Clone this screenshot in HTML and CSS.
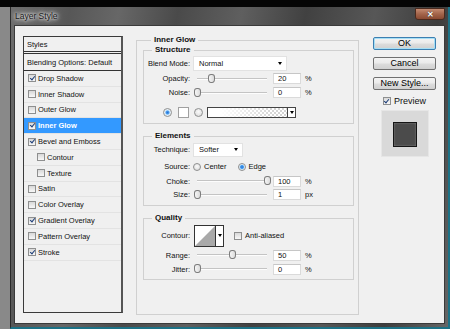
FILE: index.html
```html
<!DOCTYPE html>
<html lang="en">
<head>
    <meta charset="UTF-8">
    <title>Layer Style</title>
    <link rel="stylesheet" href="styles.css">
</head>
<body>
    <div class="topbar"></div>

    <div class="window">
        <div class="titlebar">
            <span class="title">Layer Style</span>
            <span class="close">&#x2715;</span>
        </div>

        <div class="client">
            <!-- Left: list of effects -->
            <ul class="styles-list">
                <li class="head">Styles</li>
                <li class="blend">Blending Options: Default</li>
                <li><span class="cb on"></span>Drop Shadow</li>
                <li><span class="cb"></span>Inner Shadow</li>
                <li><span class="cb"></span>Outer Glow</li>
                <li class="selected"><span class="cb on"></span>Inner Glow</li>
                <li><span class="cb on"></span>Bevel and Emboss</li>
                <li class="sub"><span class="cb"></span>Contour</li>
                <li class="sub"><span class="cb"></span>Texture</li>
                <li><span class="cb"></span>Satin</li>
                <li><span class="cb"></span>Color Overlay</li>
                <li><span class="cb on"></span>Gradient Overlay</li>
                <li><span class="cb"></span>Pattern Overlay</li>
                <li><span class="cb on"></span>Stroke</li>
            </ul>

            <!-- Middle: Inner Glow settings -->
            <fieldset class="group outer">
                <legend>Inner Glow</legend>

                <fieldset class="group structure">
                    <legend>Structure</legend>
                    <div class="row r-blend">
                        <label>Blend Mode:</label>
                        <div class="select w-blend">Normal<span class="arrow"></span></div>
                    </div>
                    <div class="row r-13">
                        <label>Opacity:</label>
                        <div class="track"><span class="thumb" style="left: 20%"></span></div>
                        <div class="field">20</div><span class="unit">%</span>
                    </div>
                    <div class="row r-15">
                        <label>Noise:</label>
                        <div class="track"><span class="thumb" style="left: 0%"></span></div>
                        <div class="field">0</div><span class="unit">%</span>
                    </div>
                    <div class="row r-color">
                        <span class="radio on"></span>
                        <span class="swatch"></span>
                        <span class="radio"></span>
                        <div class="gradient"><span class="fill"></span><span class="drop"><span class="arrow"></span></span></div>
                    </div>
                </fieldset>

                <fieldset class="group elements">
                    <legend>Elements</legend>
                    <div class="row r-blend">
                        <label>Technique:</label>
                        <div class="select w-tech">Softer<span class="arrow"></span></div>
                    </div>
                    <div class="row r-source">
                        <label>Source:</label>
                        <span class="radio"></span><span class="opt">Center</span>
                        <span class="radio on"></span><span class="opt">Edge</span>
                    </div>
                    <div class="row r-12">
                        <label>Choke:</label>
                        <div class="track"><span class="thumb" style="left: 100%"></span></div>
                        <div class="field">100</div><span class="unit">%</span>
                    </div>
                    <div class="row r-15">
                        <label>Size:</label>
                        <div class="track"><span class="thumb" style="left: 0%"></span></div>
                        <div class="field">1</div><span class="unit">px</span>
                    </div>
                </fieldset>

                <fieldset class="group quality">
                    <legend>Quality</legend>
                    <div class="row r-contour">
                        <label>Contour:</label>
                        <div class="contour">
                            <svg class="curve" width="22" height="22" viewBox="0 0 22 22">
                                <polygon points="0,22 22,0 22,22" fill="#a9a9a9"/>
                            </svg>
                            <span class="drop"><span class="arrow"></span></span>
                        </div>
                        <span class="cb"></span><span class="opt">Anti-aliased</span>
                    </div>
                    <div class="row r-14">
                        <label>Range:</label>
                        <div class="track"><span class="thumb" style="left: 50%"></span></div>
                        <div class="field">50</div><span class="unit">%</span>
                    </div>
                    <div class="row r-14">
                        <label>Jitter:</label>
                        <div class="track"><span class="thumb" style="left: 0%"></span></div>
                        <div class="field">0</div><span class="unit">%</span>
                    </div>
                </fieldset>
            </fieldset>

            <!-- Right: buttons and preview -->
            <div class="actions">
                <button class="btn default">OK</button>
                <button class="btn">Cancel</button>
                <button class="btn">New Style...</button>
                <div class="preview-toggle"><span class="cb on"></span>Preview</div>
                <div class="preview-box"><div class="preview-square"></div></div>
            </div>
        </div>
    </div>
</body>
</html>
```

FILE: styles.css
```css
/* Layer Style dialog */
body {
    margin: 0;
    width: 450px;
    height: 329px;
    overflow: hidden;
    background-color: #898989;
    font-family: "Liberation Sans", Arial, sans-serif;
    font-size: 7.5px;
    color: #111;
}

.topbar {
    height: 7px;
    background-color: #050505;
}

.window {
    box-sizing: border-box;
    width: 440px;
    height: 322px;
    margin-left: 10px;
    padding: 0 3px 3px 3px;
    display: flex;
    flex-direction: column;
    border-left: 1px solid #2a2a2a;
    border-right: 2px solid #1d7286;
    border-bottom: 2px solid #1d7286;
    background: linear-gradient(100deg, #6e6e6e 0%, #575757 12%, #676767 22%, #4a4a4a 34%, #5f5f5f 47%, #414141 60%, #575757 74%, #3d3d3d 87%, #666 100%);
}

.titlebar {
    height: 18px;
    display: flex;
    align-items: center;
}

.title {
    padding-left: 1px;
    font-size: 8.5px;
    color: #1a1a1a;
    text-shadow: 0 0 3px #fff, 0 0 5px #ddd, 0 0 6px #ccc;
}

.close {
    margin-left: auto;
    align-self: flex-start;
    margin-top: 1px;
    width: 30px;
    height: 12px;
    box-sizing: border-box;
    display: flex;
    justify-content: center;
    align-items: center;
    font-size: 8px;
    font-weight: bold;
    color: #fff;
    text-shadow: 0 0 1px #000;
    border: 1px solid #4a2a1e;
    border-radius: 0 0 3px 3px;
    background: linear-gradient(#c48a70, #a3644a 50%, #8a4a32);
}

.client {
    box-sizing: border-box;
    height: 299px;
    display: flex;
    align-items: flex-start;
    padding: 10px 0 0 8px;
    background-color: #f0f0f0;
    border: 1px solid #3a3a3a;
}

/* Styles list */
.styles-list {
    box-sizing: border-box;
    width: 100px;
    height: 277px;
    margin: 0;
    padding: 0;
    list-style: none;
    border: 1px solid #3a3a3a;
    border-right: 2px solid #555;
}

.styles-list li {
    height: 14.8px;
    display: flex;
    align-items: center;
    padding-left: 4px;
    border-bottom: 1px solid #e3e3e3;
}

.styles-list li.head {
    height: 14px;
    padding-left: 3px;
    border-bottom: 3px double #333;
}

.styles-list li.blend {
    height: 16px;
    padding-left: 3px;
    border-bottom: 1px solid #333;
}

.styles-list li.sub {
    padding-left: 13px;
}

.styles-list li.selected {
    background-color: #3399ff;
    color: #fff;
    font-weight: bold;
}

.styles-list .cb {
    margin-right: 2px;
}

/* Checkbox and radio */
.cb {
    position: relative;
    box-sizing: border-box;
    width: 8px;
    height: 8px;
    flex: none;
    border: 1px solid #8e8f8f;
    background: linear-gradient(#d8d8d8, #f8f8f8);
}

.cb.on::after {
    content: "";
    position: absolute;
    left: 1.5px;
    top: -0.5px;
    width: 2px;
    height: 4px;
    border: solid #1d3e78;
    border-width: 0 1.3px 1.3px 0;
    transform: rotate(40deg);
}

.radio {
    box-sizing: border-box;
    width: 9px;
    height: 9px;
    flex: none;
    border-radius: 50%;
    border: 1px solid #8e8f8f;
    background: radial-gradient(circle at 50% 40%, #fafafa, #d6d6d6);
}

.radio.on {
    background: radial-gradient(circle, #2d6fd0 0, #4aa0f0 1.6px, #d0e8fb 2.4px, #f4f4f4 3.5px);
}

/* Group boxes */
.group {
    margin: 0;
    padding: 0;
    min-width: 0;
    border: 1px solid #d0d0d0;
}

.group legend {
    margin-left: 8px;
    padding: 0 3px;
    line-height: 10px;
    font-size: 8px;
    font-weight: bold;
    color: #111;
}

.group.outer {
    box-sizing: border-box;
    width: 223px;
    height: 280px;
    margin: -1px 0 0 13px;
    padding: 0 4px 0 6px;
}

.structure {
    padding-bottom: 2px;
}

.elements {
    margin-top: 7px;
    padding-bottom: 3px;
}

.quality {
    margin-top: 7px;
    padding-bottom: 3px;
}

/* Rows */
.row {
    display: flex;
    align-items: center;
}

.row label {
    width: 46px;
    flex: none;
    margin-right: 3px;
    text-align: right;
}

.r-blend { height: 17px; }
.r-source { height: 17px; }
.r-12 { height: 12px; }
.r-13 { height: 13px; }
.r-14 { height: 14px; }
.r-15 { height: 15px; }
.r-contour { height: 25px; }

.r-color {
    height: 18px;
    margin-top: 3px;
    padding-left: 19px;
}

.select {
    box-sizing: border-box;
    height: 15px;
    display: flex;
    align-items: center;
    padding-left: 5px;
    background-color: #fff;
    border: 1px solid #e2e2e2;
}

.select .arrow {
    margin-left: auto;
    margin-right: 4px;
}

.w-blend { width: 94px; }
.w-tech { width: 50px; height: 14px; }

.arrow {
    width: 0;
    height: 0;
    border-left: 2.5px solid transparent;
    border-right: 2.5px solid transparent;
    border-top: 3px solid #000;
}

.track {
    position: relative;
    box-sizing: border-box;
    width: 70px;
    height: 2px;
    margin-left: 4px;
    border-top: 1px solid #c4c4c4;
    border-bottom: 1px solid #fdfdfd;
}

.thumb {
    position: absolute;
    top: -5px;
    width: 7px;
    height: 9px;
    margin-left: -3px;
    box-sizing: border-box;
    border: 1px solid #7c7c7c;
    border-radius: 3px 3px 3px 3px / 3px 3px 4px 4px;
    background: linear-gradient(90deg, #f6f6f6, #dcdcdc);
}

.field {
    box-sizing: border-box;
    width: 28px;
    height: 11px;
    margin-left: 6px;
    padding-left: 4px;
    line-height: 10px;
    background-color: #fff;
    border: 1px solid #dadada;
    border-top-color: #c6c6c6;
}

.unit {
    margin-left: 4px;
}

.swatch {
    box-sizing: border-box;
    width: 11px;
    height: 11px;
    margin: 0 5px 0 6px;
    background-color: #fff;
    border: 1px solid #a0a0a0;
}

.gradient {
    box-sizing: border-box;
    width: 89px;
    height: 11px;
    margin-left: 4px;
    display: flex;
    border: 1px solid #444;
}

.gradient .fill {
    flex: 1;
    background:
        linear-gradient(90deg, #fff 15%, rgba(255, 255, 255, 0) 85%),
        repeating-conic-gradient(#d4d4d4 0 25%, #fff 0 50%) 0 0 / 4px 4px;
}

.drop {
    width: 7px;
    display: flex;
    justify-content: center;
    align-items: center;
    background-color: #fff;
    border-left: 1px solid #444;
}

.opt {
    margin-left: 3px;
}

.r-source .radio {
    width: 8px;
    height: 8px;
}

.r-source .opt:nth-of-type(2) {
    margin-right: 11px;
}

.contour {
    box-sizing: border-box;
    height: 22px;
    margin-left: 1px;
    margin-right: 10px;
    display: flex;
    border: 1px solid #333;
    background-color: #fff;
}

.contour .curve {
    display: block;
    width: 20px;
    height: 20px;
}

.contour .drop {
    border-left-color: #333;
}

/* Right column */
.actions {
    width: 63px;
    margin: 1px 0 0 14px;
    display: flex;
    flex-direction: column;
    align-items: center;
    font-size: 9px;
}

.btn {
    box-sizing: border-box;
    width: 63px;
    height: 13px;
    margin: 0 0 7px 0;
    padding: 0;
    font-family: inherit;
    font-size: 9px;
    line-height: 11px;
    color: #000;
    border: 1px solid #707070;
    border-radius: 2px;
    background: linear-gradient(#f3f3f3, #ebebeb 45%, #dcdcdc 55%, #d0d0d0);
}

.btn.default {
    border-color: #3c7fb1;
    box-shadow: inset 0 0 0 1px #a6dff6;
}

.preview-toggle {
    height: 10px;
    margin-top: -1px;
    display: flex;
    align-items: center;
}

.preview-toggle .cb {
    margin-right: 3px;
}

.preview-box {
    box-sizing: border-box;
    width: 48px;
    height: 47px;
    margin-top: 4px;
    display: flex;
    justify-content: center;
    align-items: center;
    background-color: #d9d9d9;
    border: 1px solid #e6e6e6;
}

.preview-square {
    box-sizing: border-box;
    width: 24px;
    height: 25px;
    margin-top: 2px;
    background-color: #4b4b4b;
    border: 1px solid #151515;
    box-shadow: inset 0 0 2px rgba(255, 255, 255, 0.35);
}
```
